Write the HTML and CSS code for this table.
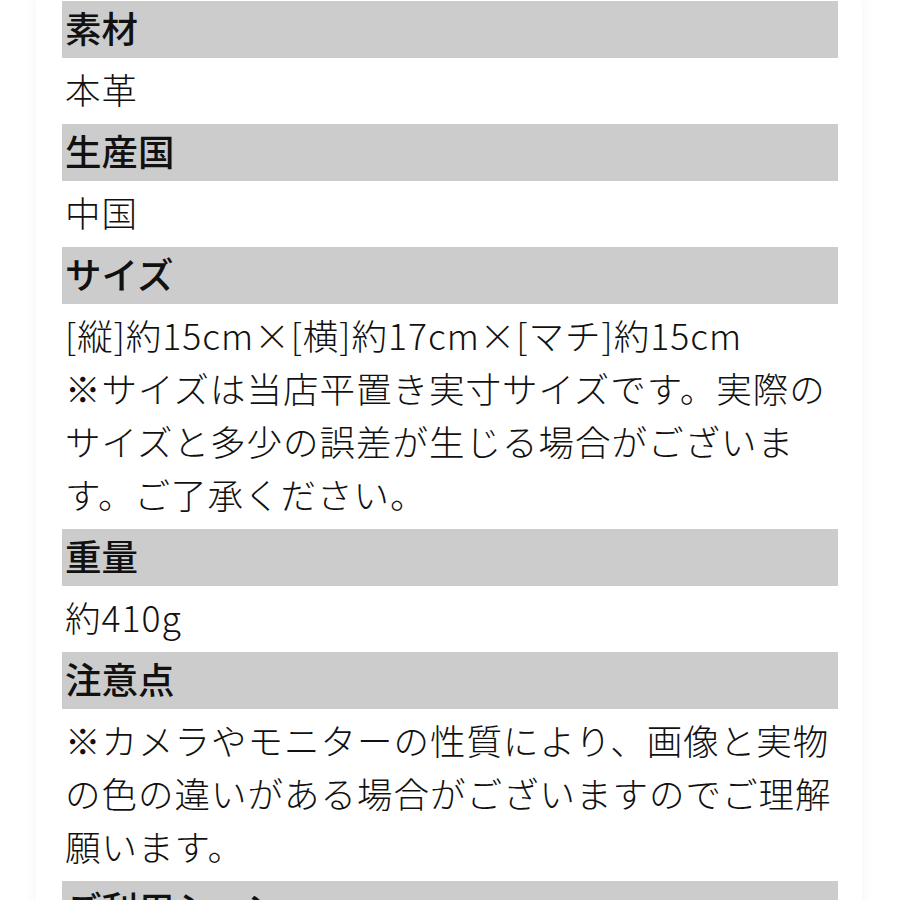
FILE: index.html
```html
<!DOCTYPE html>
<html lang="ja">
<head>
<meta charset="utf-8">
<link rel="stylesheet" href="styles.css">
</head>
<body>
<div class="panel">
  <dl class="spec">
    <dt class="head">素材</dt>
    <dd class="val">本革</dd>
    <dt class="head">生産国</dt>
    <dd class="val">中国</dd>
    <dt class="head">サイズ</dt>
    <dd class="val">[縦]約15cm×[横]約17cm×[マチ]約15cm<br>※サイズは当店平置き実寸サイズです。実際のサイズと多少の誤差が生じる場合がございます。ご了承ください。</dd>
    <dt class="head">重量</dt>
    <dd class="val">約410g</dd>
    <dt class="head">注意点</dt>
    <dd class="val">※カメラやモニターの性質により、画像と実物の色の違いがある場合がございますのでご理解願います。</dd>
    <dt class="head">ご利用シーン</dt>
    <dd class="val">普段使い</dd>
  </dl>
</div>
</body>
</html>
```

FILE: styles.css
```css
html, body {
  margin: 0;
  padding: 0;
  background: #ffffff;
}
body {
  font-family: "Noto Sans CJK JP", "Noto Sans", sans-serif;
  color: #111111;
  overflow: hidden;
  height: 900px;
}
.panel {
  margin-left: 36px;
  width: 826px;
  box-sizing: border-box;
  padding: 1px 24px 0 26px;
  background: #ffffff;
  min-height: 900px;
  box-shadow: 0 0 14px rgba(0, 0, 0, 0.05);
}
.spec {
  margin: 0;
}
.head {
  background: #cccccc;
  font-weight: 500;
  font-size: 36.5px;
  line-height: 53px;
  padding: 0 0 4px 3px;
  height: 53px;
}
.val {
  margin: 0;
  font-size: 35.5px;
  letter-spacing: 1px;
  font-weight: 300;
  line-height: 53px;
  padding: 4px 0 9px 3px;
}
```
